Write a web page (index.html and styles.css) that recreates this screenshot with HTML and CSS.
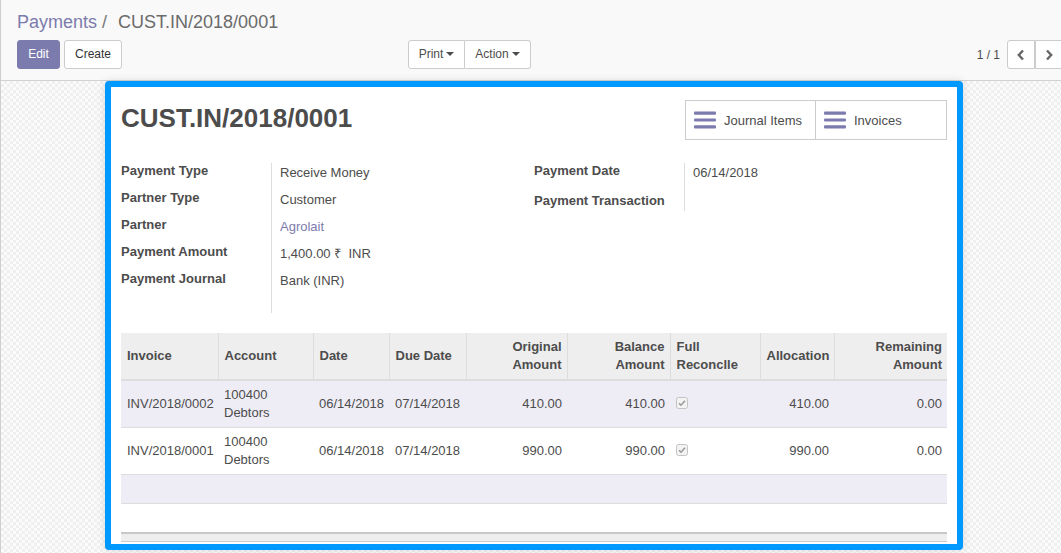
FILE: index.html
```html
<!DOCTYPE html>
<html>
<head>
<meta charset="utf-8">
<link rel="stylesheet" href="styles.css">
</head>
<body>
<div class="app">
  <div class="cp">
    <div class="breadcrumb"><a class="bc-link">Payments</a><span class="bc-sep">/</span><span class="bc-cur">CUST.IN/2018/0001</span></div>
    <div class="cp-row">
      <div class="cp-left">
        <div class="cp-buttons">
          <button class="btn btn-primary">Edit</button>
          <button class="btn btn-default">Create</button>
        </div>
        <div class="btn-group">
          <button class="btn btn-default btn-dd">Print<span class="caret"></span></button>
          <button class="btn btn-default btn-dd">Action<span class="caret"></span></button>
        </div>
      </div>
      <div class="cp-right">
        <span class="pager-value">1 / 1</span>
        <div class="btn-group pager-btns">
          <button class="btn btn-default btn-pager"><svg width="10" height="12" viewBox="0 0 10 12"><path d="M7 1.5 L2.8 6 L7 10.5" fill="none" stroke="#666" stroke-width="2.4"/></svg></button>
          <button class="btn btn-default btn-pager"><svg width="10" height="12" viewBox="0 0 10 12"><path d="M3 1.5 L7.2 6 L3 10.5" fill="none" stroke="#666" stroke-width="2.4"/></svg></button>
        </div>
      </div>
    </div>
  </div>
  <div class="content">
    <div class="sheet">
      <div class="sheet-head">
        <h1 class="title">CUST.IN/2018/0001</h1>
        <div class="button-box">
          <button class="stat-btn"><svg class="bars" width="22" height="18" viewBox="0 0 22 18"><rect x="0" y="0.5" width="22" height="3.2" rx="1"/><rect x="0" y="7.4" width="22" height="3.2" rx="1"/><rect x="0" y="14.3" width="22" height="3.2" rx="1"/></svg><span>Journal Items</span></button>
          <button class="stat-btn"><svg class="bars" width="22" height="18" viewBox="0 0 22 18"><rect x="0" y="0.5" width="22" height="3.2" rx="1"/><rect x="0" y="7.4" width="22" height="3.2" rx="1"/><rect x="0" y="14.3" width="22" height="3.2" rx="1"/></svg><span>Invoices</span></button>
        </div>
      </div>
      <div class="groups">
        <div class="group">
          <div class="lbl">Payment Type</div><div class="val">Receive Money</div>
          <div class="lbl">Partner Type</div><div class="val">Customer</div>
          <div class="lbl">Partner</div><div class="val"><a class="link">Agrolait</a></div>
          <div class="lbl">Payment Amount</div><div class="val">1,400.00 ₹ &nbsp;INR</div>
          <div class="lbl last">Payment Journal</div><div class="val last">Bank (INR)</div>
        </div>
        <div class="group">
          <div class="lbl r1">Payment Date</div><div class="val r1">06/14/2018</div>
          <div class="lbl r2">Payment Transaction</div><div class="val r2"></div>
        </div>
      </div>
      <table class="list">
        <colgroup>
          <col style="width:97px"><col style="width:95px"><col style="width:76px"><col style="width:77px"><col style="width:101px"><col style="width:103px"><col style="width:90px"><col style="width:74px"><col style="width:113px">
        </colgroup>
        <thead>
          <tr>
            <th>Invoice</th>
            <th>Account</th>
            <th>Date</th>
            <th>Due Date</th>
            <th class="num">Original<br>Amount</th>
            <th class="num">Balance<br>Amount</th>
            <th>Full<br>Reconclle</th>
            <th class="num">Allocation</th>
            <th class="num">Remaining<br>Amount</th>
          </tr>
        </thead>
        <tbody>
          <tr class="odd">
            <td>INV/2018/0002</td>
            <td>100400<br>Debtors</td>
            <td>06/14/2018</td>
            <td>07/14/2018</td>
            <td class="num">410.00</td>
            <td class="num">410.00</td>
            <td><span class="chk"><svg width="12" height="12" viewBox="0 0 12 12"><rect x="0.5" y="0.5" width="11" height="11" rx="2" fill="#f3f3f3" stroke="#c4c4c4"/><path d="M3 6.2 L5 8.2 L9 3.8" fill="none" stroke="#9a9a9a" stroke-width="1.6"/></svg></span></td>
            <td class="num">410.00</td>
            <td class="num">0.00</td>
          </tr>
          <tr>
            <td>INV/2018/0001</td>
            <td>100400<br>Debtors</td>
            <td>06/14/2018</td>
            <td>07/14/2018</td>
            <td class="num">990.00</td>
            <td class="num">990.00</td>
            <td><span class="chk"><svg width="12" height="12" viewBox="0 0 12 12"><rect x="0.5" y="0.5" width="11" height="11" rx="2" fill="#f3f3f3" stroke="#c4c4c4"/><path d="M3 6.2 L5 8.2 L9 3.8" fill="none" stroke="#9a9a9a" stroke-width="1.6"/></svg></span></td>
            <td class="num">990.00</td>
            <td class="num">0.00</td>
          </tr>
          <tr class="odd empty"><td colspan="9"></td></tr>
          <tr class="empty"><td colspan="9"></td></tr>
        </tbody>
        <tfoot>
          <tr><td colspan="9"></td></tr>
        </tfoot>
      </table>
    </div>
  </div>
</div>
</body>
</html>
```

FILE: styles.css
```css
* { box-sizing: border-box; }
html, body { margin: 0; padding: 0; }
body {
  width: 1061px;
  height: 553px;
  overflow: hidden;
  font-family: "Liberation Sans", Arial, sans-serif;
  font-size: 13px;
  color: #4c4c4c;
}
.app {
  height: 553px;
  border-left: 1px solid #cfcfcf;
  display: flex;
  flex-direction: column;
}
.cp {
  height: 81px;
  background: #f9f9f9;
  border-bottom: 1px solid #d2d2d2;
  padding-left: 16px;
  flex: none;
}
.breadcrumb {
  padding-top: 11px;
  height: 32px;
  font-size: 18px;
  line-height: 22px;
  white-space: nowrap;
}
.bc-link { color: #7c7bad; }
.bc-sep { color: #777; padding: 0 11px 0 5px; }
.bc-cur { color: #6b6b6b; }
.cp-row {
  margin-top: 8px;
  display: flex;
  height: 29px;
}
.cp-left {
  width: 514px;
  display: flex;
  justify-content: space-between;
}
.cp-buttons { display: flex; gap: 4px; }
.btn {
  font-family: "Liberation Sans", Arial, sans-serif;
  font-size: 12px;
  height: 29px;
  padding: 0 10px;
  border-radius: 3px;
  border: 1px solid #ccc;
  background: #fff;
  color: #333;
  line-height: 27px;
  margin: 0;
}
.btn-primary {
  background: #7c7bad;
  border-color: #7c7bad;
  color: #fff;
  width: 43px;
  padding: 0;
}
.cp-buttons .btn-default { width: 58px; padding: 0; }
.btn-group { display: flex; }
.btn-group .btn { border-radius: 0; }
.btn-group .btn:first-child { border-radius: 3px 0 0 3px; }
.btn-group .btn:last-child { border-radius: 0 3px 3px 0; border-left: none; }
.btn-dd { color: #4c4c4c; padding: 0; }
.btn-dd:first-child { width: 57px; }
.btn-dd:last-child { width: 66px; }
.caret {
  display: inline-block;
  width: 0; height: 0;
  margin-left: 3px;
  vertical-align: 2px;
  border-top: 4px solid #4c4c4c;
  border-left: 4px solid transparent;
  border-right: 4px solid transparent;
}
.cp-right {
  flex: 1;
  display: flex;
  justify-content: flex-end;
  align-items: center;
  margin-right: -1px;
}
.pager-value { font-size: 12px; color: #4c4c4c; margin-right: 7px; }
.btn-pager { width: 28px; padding: 0; display: flex; align-items: center; justify-content: center; }
.pager-btns .btn:last-child { border-left: 1px solid #ccc; width: 27px; border-right: none; border-radius: 0; }

.content {
  flex: 1;
  background-color: #f7f7f7;
  background-image: repeating-conic-gradient(#efefef 0 25%, #fbfbfb 0 50%);
  background-size: 6px 6px;
  padding-left: 104px;
}
.sheet {
  width: 858px;
  height: 469px;
  border: 6px solid #0099ff;
  border-radius: 4px;
  background: #fff;
  padding: 13px 10px 0;
  overflow: hidden;
  box-shadow: 0 0 8px rgba(0,0,0,0.12);
}
.sheet-head {
  display: flex;
  justify-content: space-between;
  align-items: flex-start;
}
.title {
  margin: 3px 0 0;
  font-size: 26px;
  line-height: 30px;
  font-weight: bold;
  color: #4c4c4c;
}
.button-box {
  display: flex;
  border: 1px solid #ccc;
  height: 40px;
}
.stat-btn {
  width: 129px;
  height: 38px;
  border: none;
  background: #fff;
  display: flex;
  align-items: center;
  padding: 0 0 0 8px;
  gap: 8px;
  font-family: "Liberation Sans", Arial, sans-serif;
  font-size: 13px;
  color: #4c4c4c;
}
.stat-btn + .stat-btn { border-left: 1px solid #ccc; width: 131px; }
.bars { fill: #7c7bad; flex: none; }

.groups {
  display: flex;
  margin-top: 23px;
}
.group {
  width: 413px;
  display: grid;
  grid-template-columns: 151px 1fr;
  align-content: start;
}
.lbl {
  height: 27px;
  border-right: 1px solid #ddd;
  font-weight: bold;
  line-height: 16px;
  white-space: nowrap;
}
.val {
  height: 27px;
  padding: 1px 0 0 8px;
  line-height: 17px;
}
.last { height: 42px; }
.r1 { height: 30px; }
.r2 { height: 18px; }
.link { color: #7c7bad; }

.list {
  margin-top: 20px;
  width: 826px;
  border-collapse: collapse;
  table-layout: fixed;
}
.list th, .list td {
  padding: 5px 5px 5px 6px;
  line-height: 18px;
  text-align: left;
  vertical-align: middle;
}
.list th {
  background: #eee;
  font-weight: bold;
  border-left: 1px solid #ddd;
  border-bottom: 2px solid #ddd;
  color: #4c4c4c;
}
.list th:first-child { border-left: none; }
.list td { border-top: 1px solid #ddd; }
.list .num { text-align: right; }
.list tr.odd td { background: #eeedf6; }
.list tr.empty td { height: 29px; padding: 0; }
.list tfoot td {
  height: 9px;
  padding: 0;
  background: #eee;
  border-top: 2px solid #c8c8c8;
  border-bottom: 1px solid #ccc;
}
.chk { display: inline-flex; vertical-align: -1px; }
```
